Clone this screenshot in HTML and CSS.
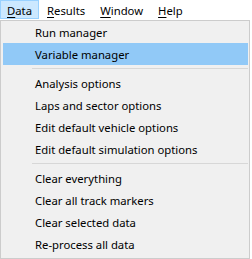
FILE: index.html
```html
<!DOCTYPE html>
<html>
<head>
<meta charset="utf-8">
<link rel="stylesheet" href="styles.css">
</head>
<body>
<div class="menubar">
  <div class="top-item active"><u>D</u>ata</div>
  <div class="top-item"><u>R</u>esults</div>
  <div class="top-item"><u>W</u>indow</div>
  <div class="top-item"><u>H</u>elp</div>
</div>
<div class="dropdown">
  <div class="item">Run manager</div>
  <div class="item hover">Variable manager</div>
  <div class="sep"></div>
  <div class="item">Analysis options</div>
  <div class="item">Laps and sector options</div>
  <div class="item">Edit default vehicle options</div>
  <div class="item">Edit default simulation options</div>
  <div class="sep"></div>
  <div class="item">Clear everything</div>
  <div class="item">Clear all track markers</div>
  <div class="item">Clear selected data</div>
  <div class="item">Re-process all data</div>
</div>
</body>
</html>
```
FILE: styles.css
```css
html, body {
  margin: 0;
  padding: 0;
  background: #ffffff;
  font-family: "Noto Sans", "DejaVu Sans", sans-serif;
  font-size: 11.3px;
  color: #000;
}
.menubar {
  display: flex;
  height: 20px;
  background: #fff;
}
.top-item {
  height: 19px;
  line-height: 18px;
  padding: 1px 6px 0 6px;
  border: 1px solid transparent;
  box-sizing: border-box;
  margin-right: 1px;
}
.top-item.active {
  background: #cce8ff;
  border-color: #99d1ff;
}
.top-item u {
  text-decoration-thickness: 1px;
  text-underline-offset: 2px;
}
.dropdown {
  width: 250px;
  height: 239px;
  box-sizing: border-box;
  border: 1px solid #cccccc;
  background: #f0f0f0;
  padding: 0 1px 2px 2px;
  display: flex;
  flex-direction: column;
}
.item {
  height: 22px;
  box-sizing: border-box;
  padding-top: 2px;
  line-height: 20px;
  padding-left: 32px;
  white-space: nowrap;
}
.item.hover {
  background: #91c9f7;
}
.sep {
  height: 7px;
  display: flex;
  align-items: center;
  padding-left: 29px;
}
.sep::after {
  content: "";
  display: block;
  height: 1px;
  width: 100%;
  background: #d7d7d7;
}
```
